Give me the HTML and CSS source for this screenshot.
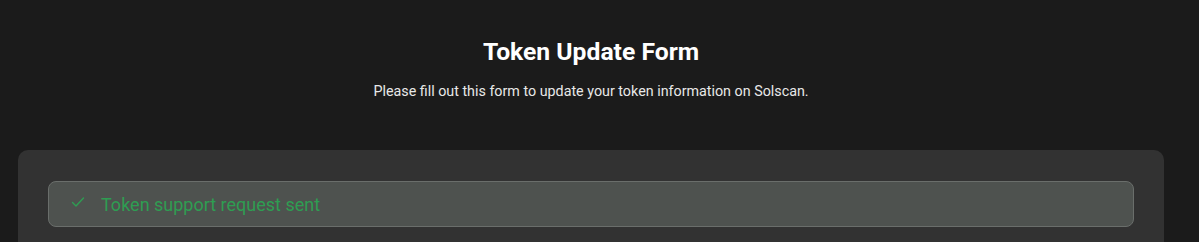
FILE: index.html
```html
<!DOCTYPE html>
<html>
<head>
<meta charset="utf-8">
<link rel="stylesheet" href="styles.css">
</head>
<body>
<div class="page">
  <header class="head">
    <h1 class="title">Token Update Form</h1>
    <p class="subtitle">Please fill out this form to update your token information on Solscan.</p>
  </header>
  <section class="card">
    <div class="alert">
      <svg class="check" width="14" height="14" viewBox="0 0 14 14"><path d="M1.5 7.5 L5 11 L12.5 3" fill="none" stroke="#2e9d52" stroke-width="1.4" stroke-linecap="round" stroke-linejoin="round"/></svg>
      <span class="alert-text">Token support request sent</span>
    </div>
  </section>
</div>
</body>
</html>
```
FILE: styles.css
```css
html, body {
  margin: 0;
  padding: 0;
  background: #1b1b1b;
  font-family: Roboto, "Liberation Sans", sans-serif;
  overflow: hidden;
}
.page {
  width: 1146px;
  margin-left: 18px;
}
.head {
  display: flex;
  flex-direction: column;
  align-items: center;
  padding-top: 36px;
}
.title {
  margin: 0;
  font-size: 24.7px;
  line-height: 32px;
  font-weight: 700;
  color: #ffffff;
}
.subtitle {
  margin: 13px 0 0;
  font-size: 14.3px;
  line-height: 20px;
  color: #e8e8e8;
}
.card {
  margin-top: 49px;
  background: #323232;
  border-radius: 10px;
  padding: 31px 30px 30px;
  min-height: 100px;
}
.alert {
  display: flex;
  align-items: center;
  height: 44px;
  padding: 0 22px;
  background: #4e524f;
  border: 1px solid #6a6e6b;
  border-radius: 8px;
}
.check {
  flex: none;
  margin-right: 16px;
  margin-top: -4px;
}
.alert-text {
  font-size: 18px;
  color: #2e9d52;
}
```
